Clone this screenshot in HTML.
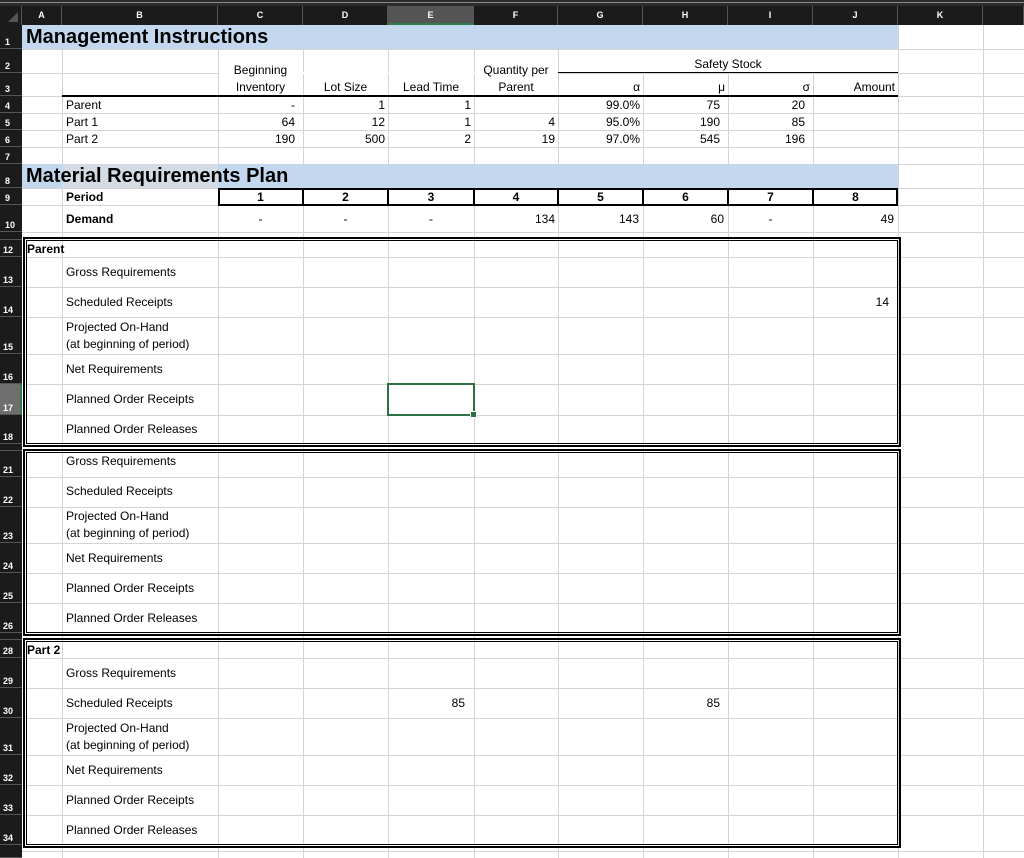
<!DOCTYPE html>
<html><head><meta charset="utf-8"><style>
*{margin:0;padding:0;box-sizing:border-box}
body{width:1024px;height:858px;overflow:hidden;background:#fff;position:relative;font-family:"Liberation Sans",Arial,sans-serif;font-size:12px;color:#000}
div{position:absolute}
.v{width:1px;background:#d4d4d4}
.h{height:1px;background:#d4d4d4}
.ch{top:6px;height:19px;color:#fff;font-weight:bold;font-size:9px;text-align:center;line-height:19px;background:#1b1b1b;border-right:1px solid #555}
.rh{left:0;width:22px;background:#1b1b1b;color:#fff;font-weight:bold;font-size:9px;border-bottom:1px solid #555;padding-left:5px;display:flex;align-items:flex-end;padding-bottom:1px}
.t{white-space:nowrap;line-height:14px}
.r{text-align:right}
.c{text-align:center}
.b{font-weight:bold}
</style></head><body>
<div style="left:0;top:0;width:1024px;height:6px;background:#2b2b2b"></div>
<div style="left:0;top:2px;width:1024px;height:1px;background:#8a8a8a"></div>
<div class="ch" style="left:0;width:22px"></div>
<div style="left:8px;top:12px;width:0;height:0;border-left:10px solid transparent;border-bottom:10px solid #555"></div>
<div class="ch" style="left:22px;width:40px">A</div>
<div class="ch" style="left:62px;width:156px">B</div>
<div class="ch" style="left:218px;width:85px">C</div>
<div class="ch" style="left:303px;width:85px">D</div>
<div class="ch" style="left:388px;width:86px;background:#555;border-bottom:2px solid #2e7d4a">E</div>
<div class="ch" style="left:474px;width:84px">F</div>
<div class="ch" style="left:558px;width:85px">G</div>
<div class="ch" style="left:643px;width:85px">H</div>
<div class="ch" style="left:728px;width:85px">I</div>
<div class="ch" style="left:813px;width:85px">J</div>
<div class="ch" style="left:898px;width:85px">K</div>
<div class="ch" style="left:983px;width:41px"></div>

<div class="v" style="left:62px;top:25px;height:833px"></div>
<div class="v" style="left:218px;top:25px;height:833px"></div>
<div class="v" style="left:303px;top:25px;height:833px"></div>
<div class="v" style="left:388px;top:25px;height:833px"></div>
<div class="v" style="left:474px;top:25px;height:833px"></div>
<div class="v" style="left:558px;top:25px;height:833px"></div>
<div class="v" style="left:643px;top:25px;height:833px"></div>
<div class="v" style="left:728px;top:25px;height:833px"></div>
<div class="v" style="left:813px;top:25px;height:833px"></div>
<div class="v" style="left:898px;top:25px;height:833px"></div>
<div class="v" style="left:983px;top:25px;height:833px"></div>
<div class="h" style="left:22px;width:1002px;top:49px"></div>
<div class="h" style="left:22px;width:1002px;top:73px"></div>
<div class="h" style="left:22px;width:1002px;top:96px"></div>
<div class="h" style="left:22px;width:1002px;top:113px"></div>
<div class="h" style="left:22px;width:1002px;top:130px"></div>
<div class="h" style="left:22px;width:1002px;top:147px"></div>
<div class="h" style="left:22px;width:1002px;top:164px"></div>
<div class="h" style="left:22px;width:1002px;top:188px"></div>
<div class="h" style="left:22px;width:1002px;top:205px"></div>
<div class="h" style="left:22px;width:1002px;top:232px"></div>
<div class="h" style="left:22px;width:1002px;top:257px"></div>
<div class="h" style="left:22px;width:1002px;top:287px"></div>
<div class="h" style="left:22px;width:1002px;top:317px"></div>
<div class="h" style="left:22px;width:1002px;top:354px"></div>
<div class="h" style="left:22px;width:1002px;top:384px"></div>
<div class="h" style="left:22px;width:1002px;top:415px"></div>
<div class="h" style="left:22px;width:1002px;top:477px"></div>
<div class="h" style="left:22px;width:1002px;top:507px"></div>
<div class="h" style="left:22px;width:1002px;top:543px"></div>
<div class="h" style="left:22px;width:1002px;top:573px"></div>
<div class="h" style="left:22px;width:1002px;top:603px"></div>
<div class="h" style="left:22px;width:1002px;top:658px"></div>
<div class="h" style="left:22px;width:1002px;top:688px"></div>
<div class="h" style="left:22px;width:1002px;top:718px"></div>
<div class="h" style="left:22px;width:1002px;top:755px"></div>
<div class="h" style="left:22px;width:1002px;top:785px"></div>
<div class="h" style="left:22px;width:1002px;top:815px"></div>
<div class="h" style="left:22px;width:1002px;top:851px"></div>
<div style="left:219px;top:72px;width:339px;height:2px;background:#fff"></div>
<div style="left:559px;top:49.5px;width:338px;height:23px;background:#fff"></div>

<div style="left:22px;top:25px;width:876px;height:24px;background:#c3d7ee"></div>
<div style="left:22px;top:164px;width:876px;height:24px;background:#c3d7ee"></div>
<div style="left:62px;top:164px;width:156px;height:24px;background:#d3dbe5"></div>

<div class="rh" style="top:25px;height:24px">1</div>
<div class="rh" style="top:49px;height:24px">2</div>
<div class="rh" style="top:73px;height:23px">3</div>
<div class="rh" style="top:96px;height:17px">4</div>
<div class="rh" style="top:113px;height:17px">5</div>
<div class="rh" style="top:130px;height:17px">6</div>
<div class="rh" style="top:147px;height:17px">7</div>
<div class="rh" style="top:164px;height:24px">8</div>
<div class="rh" style="top:188px;height:17px">9</div>
<div class="rh" style="top:205px;height:27px">10</div>
<div class="rh" style="top:232px;height:8px"></div>
<div class="rh" style="top:240px;height:17px;padding-left:3px">12</div>
<div class="rh" style="top:257px;height:30px;padding-left:3px">13</div>
<div class="rh" style="top:287px;height:30px;padding-left:3px">14</div>
<div class="rh" style="top:317px;height:37px;padding-left:3px">15</div>
<div class="rh" style="top:354px;height:30px;padding-left:3px">16</div>
<div class="rh" style="top:384px;height:31px;padding-left:3px;background:#6e6e6e;border-right:2px solid #2e7d4a">17</div>
<div class="rh" style="top:415px;height:29px;padding-left:3px">18</div>
<div class="rh" style="top:444px;height:7px"></div>
<div class="rh" style="top:451px;height:26px;padding-left:3px">21</div>
<div class="rh" style="top:477px;height:30px;padding-left:3px">22</div>
<div class="rh" style="top:507px;height:36px;padding-left:3px">23</div>
<div class="rh" style="top:543px;height:30px;padding-left:3px">24</div>
<div class="rh" style="top:573px;height:30px;padding-left:3px">25</div>
<div class="rh" style="top:603px;height:30px;padding-left:3px">26</div>
<div class="rh" style="top:633px;height:7px"></div>
<div class="rh" style="top:640px;height:18px;padding-left:3px">28</div>
<div class="rh" style="top:658px;height:30px;padding-left:3px">29</div>
<div class="rh" style="top:688px;height:30px;padding-left:3px">30</div>
<div class="rh" style="top:718px;height:37px;padding-left:3px">31</div>
<div class="rh" style="top:755px;height:30px;padding-left:3px">32</div>
<div class="rh" style="top:785px;height:30px;padding-left:3px">33</div>
<div class="rh" style="top:815px;height:30px;padding-left:3px">34</div>
<div class="rh" style="top:845px;height:13px"></div>

<div class="t b" style="left:26px;top:26px;font-size:20px;line-height:23px">Management Instructions</div>
<div class="t b" style="left:26px;top:165px;font-size:20px;line-height:23px">Material Requirements Plan</div>

<div class="t c" style="left:218px;width:85px;top:63px">Beginning</div>
<div class="t c" style="left:218px;width:85px;top:80px">Inventory</div>
<div class="t c" style="left:303px;width:85px;top:80px">Lot Size</div>
<div class="t c" style="left:388px;width:86px;top:80px">Lead Time</div>
<div class="t c" style="left:474px;width:84px;top:63px">Quantity per</div>
<div class="t c" style="left:474px;width:84px;top:80px">Parent</div>
<div class="t c" style="left:558px;width:340px;top:57px">Safety Stock</div>
<div style="left:558px;top:72px;width:340px;height:1px;background:#000"></div>
<div class="t r" style="left:558px;width:82px;top:80px">α</div>
<div class="t r" style="left:643px;width:82px;top:80px">μ</div>
<div class="t r" style="left:728px;width:82px;top:80px">σ</div>
<div class="t r" style="left:813px;width:82px;top:80px">Amount</div>
<div style="left:62px;top:95px;width:836px;height:2px;background:#000"></div>

<div class="t" style="left:66px;top:98px">Parent</div>
<div class="t" style="left:66px;top:115px">Part 1</div>
<div class="t" style="left:66px;top:132px">Part 2</div>
<div class="t r" style="left:218px;width:77px;top:98px">-</div>
<div class="t r" style="left:218px;width:77px;top:115px">64</div>
<div class="t r" style="left:218px;width:77px;top:132px">190</div>
<div class="t r" style="left:303px;width:82px;top:98px">1</div>
<div class="t r" style="left:303px;width:82px;top:115px">12</div>
<div class="t r" style="left:303px;width:82px;top:132px">500</div>
<div class="t r" style="left:388px;width:83px;top:98px">1</div>
<div class="t r" style="left:388px;width:83px;top:115px">1</div>
<div class="t r" style="left:388px;width:83px;top:132px">2</div>
<div class="t r" style="left:474px;width:81px;top:115px">4</div>
<div class="t r" style="left:474px;width:81px;top:132px">19</div>
<div class="t r" style="left:558px;width:82px;top:98px">99.0%</div>
<div class="t r" style="left:558px;width:82px;top:115px">95.0%</div>
<div class="t r" style="left:558px;width:82px;top:132px">97.0%</div>
<div class="t r" style="left:643px;width:77px;top:98px">75</div>
<div class="t r" style="left:643px;width:77px;top:115px">190</div>
<div class="t r" style="left:643px;width:77px;top:132px">545</div>
<div class="t r" style="left:728px;width:77px;top:98px">20</div>
<div class="t r" style="left:728px;width:77px;top:115px">85</div>
<div class="t r" style="left:728px;width:77px;top:132px">196</div>

<div style="left:218px;top:188px;width:680px;height:18px;border:2px solid #000"></div>
<div style="left:302px;top:188px;width:2px;height:18px;background:#000"></div>
<div style="left:387px;top:188px;width:2px;height:18px;background:#000"></div>
<div style="left:473px;top:188px;width:2px;height:18px;background:#000"></div>
<div style="left:557px;top:188px;width:2px;height:18px;background:#000"></div>
<div style="left:642px;top:188px;width:2px;height:18px;background:#000"></div>
<div style="left:727px;top:188px;width:2px;height:18px;background:#000"></div>
<div style="left:812px;top:188px;width:2px;height:18px;background:#000"></div>
<div class="t b" style="left:66px;top:190px">Period</div>
<div class="t b c" style="left:218px;width:85px;top:190px">1</div>
<div class="t b c" style="left:303px;width:85px;top:190px">2</div>
<div class="t b c" style="left:388px;width:86px;top:190px">3</div>
<div class="t b c" style="left:474px;width:84px;top:190px">4</div>
<div class="t b c" style="left:558px;width:85px;top:190px">5</div>
<div class="t b c" style="left:643px;width:85px;top:190px">6</div>
<div class="t b c" style="left:728px;width:85px;top:190px">7</div>
<div class="t b c" style="left:813px;width:85px;top:190px">8</div>
<div class="t b" style="left:66px;top:212px">Demand</div>
<div class="t c" style="left:218px;width:85px;top:212px">-</div>
<div class="t c" style="left:303px;width:85px;top:212px">-</div>
<div class="t c" style="left:388px;width:86px;top:212px">-</div>
<div class="t r" style="left:474px;width:81px;top:212px">134</div>
<div class="t r" style="left:558px;width:81px;top:212px">143</div>
<div class="t r" style="left:643px;width:81px;top:212px">60</div>
<div class="t c" style="left:728px;width:85px;top:212px">-</div>
<div class="t r" style="left:813px;width:81px;top:212px">49</div>

<div style="left:23px;top:237px;width:878px;height:210px;border:2px solid #000"><div style="left:1px;top:1px;right:1px;bottom:1px;border:1px solid #000"></div></div>
<div style="left:23px;top:449px;width:878px;height:187px;border:2px solid #000"><div style="left:1px;top:1px;right:1px;bottom:1px;border:1px solid #000"></div></div>
<div style="left:23px;top:638px;width:878px;height:210px;border:2px solid #000"><div style="left:1px;top:1px;right:1px;bottom:1px;border:1px solid #000"></div></div>

<div class="t b" style="left:27px;top:242px">Parent</div>
<div class="t" style="left:66px;top:265px">Gross Requirements</div>
<div class="t" style="left:66px;top:295px">Scheduled Receipts</div>
<div class="t" style="left:66px;top:320px">Projected On-Hand</div>
<div class="t" style="left:66px;top:337px">(at beginning of period)</div>
<div class="t" style="left:66px;top:362px">Net Requirements</div>
<div class="t" style="left:66px;top:392px">Planned Order Receipts</div>
<div class="t" style="left:66px;top:422px">Planned Order Releases</div>
<div class="t r" style="left:813px;width:76px;top:295px">14</div>

<div class="t" style="left:66px;top:454px">Gross Requirements</div>
<div class="t" style="left:66px;top:484px">Scheduled Receipts</div>
<div class="t" style="left:66px;top:509px">Projected On-Hand</div>
<div class="t" style="left:66px;top:526px">(at beginning of period)</div>
<div class="t" style="left:66px;top:551px">Net Requirements</div>
<div class="t" style="left:66px;top:581px">Planned Order Receipts</div>
<div class="t" style="left:66px;top:611px">Planned Order Releases</div>

<div class="t b" style="left:27px;top:643px">Part 2</div>
<div class="t" style="left:66px;top:666px">Gross Requirements</div>
<div class="t" style="left:66px;top:696px">Scheduled Receipts</div>
<div class="t" style="left:66px;top:721px">Projected On-Hand</div>
<div class="t" style="left:66px;top:738px">(at beginning of period)</div>
<div class="t" style="left:66px;top:763px">Net Requirements</div>
<div class="t" style="left:66px;top:793px">Planned Order Receipts</div>
<div class="t" style="left:66px;top:823px">Planned Order Releases</div>
<div class="t r" style="left:388px;width:77px;top:696px">85</div>
<div class="t r" style="left:643px;width:77px;top:696px">85</div>

<div style="left:387px;top:383px;width:88px;height:33px;border:2px solid #2e6f43"></div>
<div style="left:470px;top:411px;width:7px;height:7px;background:#2e6f43;border:1px solid #fff"></div>
</body></html>
